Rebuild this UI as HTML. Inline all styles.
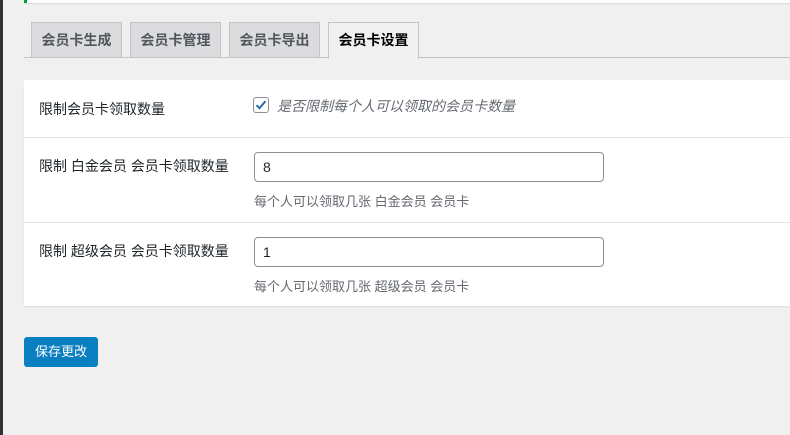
<!DOCTYPE html>
<html><head><meta charset="utf-8"><style>
body{margin:0;width:790px;height:435px;background:#f0f0f1;font-family:"Liberation Sans","Noto Sans CJK SC",sans-serif;font-size:13px;color:#1d2327;position:relative;overflow:hidden}
.dark{position:absolute;left:0;top:0;width:3px;height:435px;background:#2c3338}
.notice{position:absolute;left:24px;top:0;width:766px;height:3px;background:#fff;border-left:3px solid #00a32a;box-shadow:0 1px 1px rgba(0,0,0,.1)}
.tabline{position:absolute;left:24px;top:57px;width:766px;height:1px;background:#c3c4c7}
.tab{position:absolute;top:22px;height:34px;width:89px;border:1px solid #c3c4c7;border-bottom:none;background:#dcdcde;color:#50575e;font-weight:bold;font-size:14px;line-height:35px;text-align:center}
.tab.act{background:#f0f0f1;color:#000;height:36px}
.box{position:absolute;left:24px;top:80px;width:766px;height:226px;background:#fff;box-shadow:0 1px 1px rgba(0,0,0,.08)}
.sep{position:absolute;left:0;width:766px;height:1px;background:#e5e5e5}
.lbl{position:absolute;left:15px;font-size:14px}
.inp{position:absolute;left:230px;border:1px solid #8c8f94;border-radius:4px;font-size:14px;line-height:28px;padding-left:8px;box-sizing:border-box;width:350px;height:30px}
.desc{position:absolute;left:230px;color:#646970;font-size:13px}
.btn{position:absolute;left:24px;top:337px;width:74px;height:30px;background:#0a7fc1;border-radius:3px;color:#fff;font-size:13px;line-height:30px;text-align:center}
</style></head><body>
<div class="dark"></div>
<div class="notice"></div>
<div class="tab" style="left:31px">会员卡生成</div>
<div class="tab" style="left:130px">会员卡管理</div>
<div class="tab" style="left:229px">会员卡导出</div>
<div class="tabline"></div>
<div class="tab act" style="left:328px">会员卡设置</div>
<div class="box">
 <div class="lbl" style="top:19px">限制会员卡领取数量</div>
 <div style="position:absolute;left:229px;top:17px;width:14px;height:14px;border:1px solid #8c8f94;border-radius:3px;background:#fff">
  <svg width="14" height="14" viewBox="0 0 14 14"><path d="M2.5 7.2l3 3 6-7" fill="none" stroke="#2271b1" stroke-width="2"/></svg></div>
 <div style="position:absolute;left:253px;top:16px;color:#646970;font-style:italic;font-size:14px">是否限制每个人可以领取的会员卡数量</div>
 <div class="sep" style="top:57px"></div>
 <div class="lbl" style="top:76px">限制 白金会员 会员卡领取数量</div>
 <div class="inp" style="top:72px">8</div>
 <div class="desc" style="top:111px">每个人可以领取几张 白金会员 会员卡</div>
 <div class="sep" style="top:142px"></div>
 <div class="lbl" style="top:161px">限制 超级会员 会员卡领取数量</div>
 <div class="inp" style="top:157px">1</div>
 <div class="desc" style="top:196px">每个人可以领取几张 超级会员 会员卡</div>
</div>
<div class="btn">保存更改</div>
</body></html>
